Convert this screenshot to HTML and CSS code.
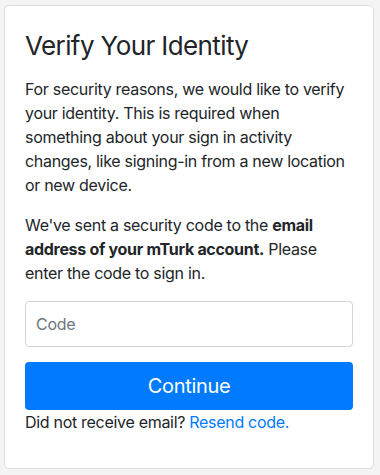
FILE: index.html
```html
<!DOCTYPE html>
<html lang="en">
<head>
    <meta charset="UTF-8">
    <meta name="viewport" content="width=device-width, initial-scale=1.0">
    <title>Verify Your Identity</title>
    <link rel="stylesheet" href="styles.css">
</head>
<body>

    <div class="card">
        <h3 class="card-title">Verify Your Identity</h3>
        <p>For security reasons, we would like to verify your identity. This is required when something about your sign in activity changes, like signing-in from a new location or new device.</p>
        <p>We've sent a security code to the <strong>email address of your mTurk account.</strong> Please enter the code to sign in.</p>

        <form class="verify-form">
            <input type="text" class="form-control" placeholder="Code" />
            <button type="button" class="btn-primary">Continue</button>
        </form>

        <div class="resend">Did not receive email? <a href="#">Resend code.</a></div>
    </div>

</body>
</html>
```

FILE: styles.css
```css
body {
    background-color: #f4f4f4;
    margin: 0;
    padding: 5px 6px 5px 4px;
    font-family: Inter, "Liberation Sans", sans-serif;
    color: #212529;
    font-size: 16px;
    line-height: 1.5;
    letter-spacing: -0.3px;
}

.card {
    background: #fff;
    border: 1px solid #dcdcdc;
    border-radius: 5px;
    padding: 20px 20px;
    height: 464px;
    box-sizing: border-box;
}

.card-title {
    font-size: 26px;
    font-weight: 400;
    line-height: 1.2;
    letter-spacing: -0.6px;
    margin: 4px 0 16px;
}

p {
    margin: 0 0 16px;
}

.verify-form {
    display: flex;
    flex-direction: column;
    gap: 15px;
    margin: 0;
}

.form-control {
    height: 46px;
    padding: 6px 10px;
    border: 1px solid #ced4da;
    border-radius: 4px;
    font-family: inherit;
    font-size: 16px;
    letter-spacing: -0.3px;
    color: #495057;
    box-sizing: border-box;
}

.form-control::placeholder {
    color: #6c757d;
}

.btn-primary {
    height: 48px;
    border: none;
    border-radius: 4px;
    background-color: #007bff;
    color: #fff;
    font-family: inherit;
    font-size: 20px;
    letter-spacing: -0.3px;
}

.resend {
    margin-top: 0;
}

.resend a {
    color: #007bff;
    text-decoration: none;
}
```
